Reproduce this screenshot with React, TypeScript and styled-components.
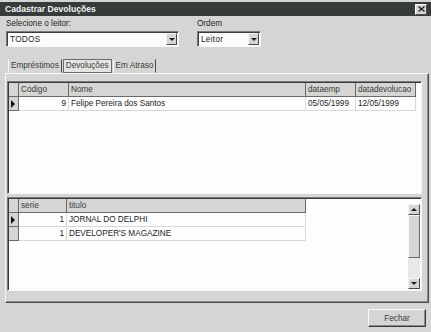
import styled, { createGlobalStyle } from "styled-components";

const GlobalStyle = createGlobalStyle`
  html, body { margin: 0; padding: 0; background: #d5d5d3; }
  body { font-family: "Liberation Sans", Arial, sans-serif; }
`;

const Window = styled.div`
  width: 431px;
  height: 332px;
  box-sizing: border-box;
  background: #d5d5d3;
  display: flex;
  flex-direction: column;
  overflow: hidden;
  padding-top: 2px;
  font-size: 8.2px;
  color: #252525;
`;

const TitleBar = styled.div`
  height: 14px;
  background: #363c3b;
  display: flex;
  align-items: center;
  justify-content: space-between;
  padding: 0 4px 0 5px;
`;

const Title = styled.span`
  color: #f4f4f4;
  font-weight: bold;
  font-size: 8.6px;
`;

const CloseButton = styled.div`
  width: 12px;
  height: 11px;
  box-sizing: border-box;
  background: #d5d5d3;
  border: 1px solid;
  border-color: #fafafa #4a4a4a #4a4a4a #fafafa;
  display: flex;
  align-items: center;
  justify-content: center;
`;

const Top = styled.div`
  display: flex;
  gap: 18px;
  padding: 3px 0 0 6px;
`;

const Field = styled.div`
  display: flex;
  flex-direction: column;
  gap: 2px;
`;

const Label = styled.div`
  height: 10px;
  line-height: 10px;
`;

const Combo = styled.div<{ $w: number }>`
  width: ${(p) => p.$w}px;
  height: 16px;
  box-sizing: border-box;
  background: #fbfbfb;
  border: 1px solid;
  border-color: #7c7c7c #f6f6f6 #f6f6f6 #7c7c7c;
  box-shadow: inset 1px 1px 0 #3a3a3a;
  display: flex;
  align-items: center;
  padding: 1px 1px 1px 3px;
`;

const ComboText = styled.span`
  flex: 1;
  letter-spacing: 0.3px;
`;

const DropButton = styled.div`
  width: 11px;
  height: 12px;
  box-sizing: border-box;
  background: #d5d5d3;
  border: 1px solid;
  border-color: #f6f6f6 #4a4a4a #4a4a4a #f6f6f6;
  display: flex;
  align-items: center;
  justify-content: center;
`;

const DownArrow = styled.div`
  width: 0;
  height: 0;
  border-left: 3px solid transparent;
  border-right: 3px solid transparent;
  border-top: 3px solid #1e1e1e;
`;

const UpArrow = styled.div`
  width: 0;
  height: 0;
  border-left: 3px solid transparent;
  border-right: 3px solid transparent;
  border-bottom: 3px solid #1e1e1e;
`;

const TabStrip = styled.div`
  display: flex;
  gap: 1px;
  margin-top: 12px;
  padding-left: 8px;
  height: 14px;
`;

const Tab = styled.div<{ $active?: boolean }>`
  height: 14px;
  box-sizing: border-box;
  padding: 0 2px;
  line-height: 12px;
  border: 1px solid;
  border-color: ${(p) =>
    p.$active ? "#6a6a6a #6a6a6a #6a6a6a #6a6a6a" : "transparent #4a4a4a transparent #f6f6f6"};
  background: ${(p) => (p.$active ? "#e4e4e2" : "transparent")};
  color: #3a3a3a;
`;

const TabPanel = styled.div`
  margin: 0 2px 0 5px;
  height: 230px;
  box-sizing: border-box;
  border: 1px solid;
  border-color: #f6f6f6 #4a4a4a #4a4a4a #f6f6f6;
  box-shadow: inset -1px -1px 0 #8a8a8a;
  padding: 7px 6px 0 1px;
  display: flex;
  flex-direction: column;
  gap: 3px;
`;

const Grid = styled.div<{ $h: number }>`
  height: ${(p) => p.$h}px;
  box-sizing: border-box;
  background: #fdfdfd;
  border: 1px solid;
  border-color: #7c7c7c #f6f6f6 #f6f6f6 #7c7c7c;
  box-shadow: inset 1px 1px 0 #3a3a3a;
  padding: 1px 0 0 1px;
  display: flex;
`;

const Rows = styled.div`
  flex: 1;
  display: flex;
  flex-direction: column;
`;

const Row = styled.div`
  display: flex;
  height: 14px;
`;

const HeadCell = styled.div<{ $w: number }>`
  width: ${(p) => p.$w}px;
  box-sizing: border-box;
  background: #d5d5d3;
  border-right: 1px solid #6a6a6a;
  border-bottom: 1px solid #6a6a6a;
  padding-left: 2px;
  line-height: 13px;
  white-space: nowrap;
  overflow: hidden;
  color: #3a3a3a;
`;

const Cell = styled.div<{ $w: number; $right?: boolean }>`
  width: ${(p) => p.$w}px;
  box-sizing: border-box;
  background: #fdfdfd;
  border-right: 1px solid #d8d8d8;
  border-bottom: 1px solid #d8d8d8;
  padding: 0 2px;
  line-height: 13px;
  white-space: nowrap;
  overflow: hidden;
  text-align: ${(p) => (p.$right ? "right" : "left")};
`;

const Indicator = styled.div<{ $w: number }>`
  width: ${(p) => p.$w}px;
  box-sizing: border-box;
  background: #d5d5d3;
  border-right: 1px solid #6a6a6a;
  border-bottom: 1px solid #6a6a6a;
  display: flex;
  align-items: center;
  padding-left: 2px;
`;

const Pointer = styled.div`
  width: 0;
  height: 0;
  border-top: 4px solid transparent;
  border-bottom: 4px solid transparent;
  border-left: 4px solid #111;
`;

const ScrollBar = styled.div`
  width: 12px;
  display: flex;
  flex-direction: column;
  background: #e8e8e6;
  margin: 5px 1px 1px 0;
`;

const ScrollButton = styled.div`
  height: 11px;
  box-sizing: border-box;
  background: #d5d5d3;
  border: 1px solid;
  border-color: #f6f6f6 #4a4a4a #4a4a4a #f6f6f6;
  display: flex;
  align-items: center;
  justify-content: center;
`;

const Thumb = styled.div`
  height: 43px;
  box-sizing: border-box;
  background: #d5d5d3;
  border: 1px solid;
  border-color: #f6f6f6 #6a6a6a #6a6a6a #f6f6f6;
`;

const Track = styled.div`
  flex: 1;
`;

const Footer = styled.div`
  display: flex;
  justify-content: flex-end;
  padding: 6px 5px 0 0;
`;

const Button = styled.div`
  width: 58px;
  height: 18px;
  box-sizing: border-box;
  background: #d5d5d3;
  border: 1px solid;
  border-color: #f6f6f6 #3a3a3a #3a3a3a #f6f6f6;
  box-shadow: inset -1px -1px 0 #8a8a8a;
  display: flex;
  align-items: center;
  justify-content: center;
  color: #3a3a3a;
`;

const emprestimos = [
  { codigo: 9, nome: "Felipe Pereira dos Santos", dataemp: "05/05/1999", datadev: "12/05/1999" },
];

const titulos = [
  { serie: 1, titulo: "JORNAL DO DELPHI" },
  { serie: 1, titulo: "DEVELOPER'S MAGAZINE" },
];

const App = () => {
  return (
    <>
      <GlobalStyle />
      <Window>
        <TitleBar>
          <Title>Cadastrar Devoluções</Title>
          <CloseButton>
            <svg width="7" height="6" viewBox="0 0 7 6">
              <path d="M0.5 0.5 L6.5 5.5 M6.5 0.5 L0.5 5.5" stroke="#1e1e1e" strokeWidth="1.3" />
            </svg>
          </CloseButton>
        </TitleBar>

        <Top>
          <Field>
            <Label>Selecione o leitor:</Label>
            <Combo $w={173}>
              <ComboText>TODOS</ComboText>
              <DropButton>
                <DownArrow />
              </DropButton>
            </Combo>
          </Field>
          <Field>
            <Label>Ordem</Label>
            <Combo $w={64}>
              <ComboText>Leitor</ComboText>
              <DropButton>
                <DownArrow />
              </DropButton>
            </Combo>
          </Field>
        </Top>

        <TabStrip>
          <Tab>Empréstimos</Tab>
          <Tab $active>Devoluções</Tab>
          <Tab>Em Atraso</Tab>
        </TabStrip>

        <TabPanel>
          <Grid $h={113}>
            <Rows>
              <Row>
                <Indicator $w={10} />
                <HeadCell $w={50}>Codigo</HeadCell>
                <HeadCell $w={237}>Nome</HeadCell>
                <HeadCell $w={50}>dataemp</HeadCell>
                <HeadCell $w={60}>datadevolucao</HeadCell>
              </Row>
              {emprestimos.map((e, i) => (
                <Row key={i}>
                  <Indicator $w={10}>{i === 0 && <Pointer />}</Indicator>
                  <Cell $w={50} $right>{e.codigo}</Cell>
                  <Cell $w={237}>{e.nome}</Cell>
                  <Cell $w={50}>{e.dataemp}</Cell>
                  <Cell $w={60}>{e.datadev}</Cell>
                </Row>
              ))}
            </Rows>
          </Grid>

          <Grid $h={94}>
            <Rows>
              <Row>
                <Indicator $w={10} />
                <HeadCell $w={48}>serie</HeadCell>
                <HeadCell $w={239}>titulo</HeadCell>
              </Row>
              {titulos.map((t, i) => (
                <Row key={i}>
                  <Indicator $w={10}>{i === 0 && <Pointer />}</Indicator>
                  <Cell $w={48} $right>{t.serie}</Cell>
                  <Cell $w={239}>{t.titulo}</Cell>
                </Row>
              ))}
            </Rows>
            <ScrollBar>
              <ScrollButton>
                <UpArrow />
              </ScrollButton>
              <Thumb />
              <Track />
              <ScrollButton>
                <DownArrow />
              </ScrollButton>
            </ScrollBar>
          </Grid>
        </TabPanel>

        <Footer>
          <Button>Fechar</Button>
        </Footer>
      </Window>
    </>
  );
};

export default App;
